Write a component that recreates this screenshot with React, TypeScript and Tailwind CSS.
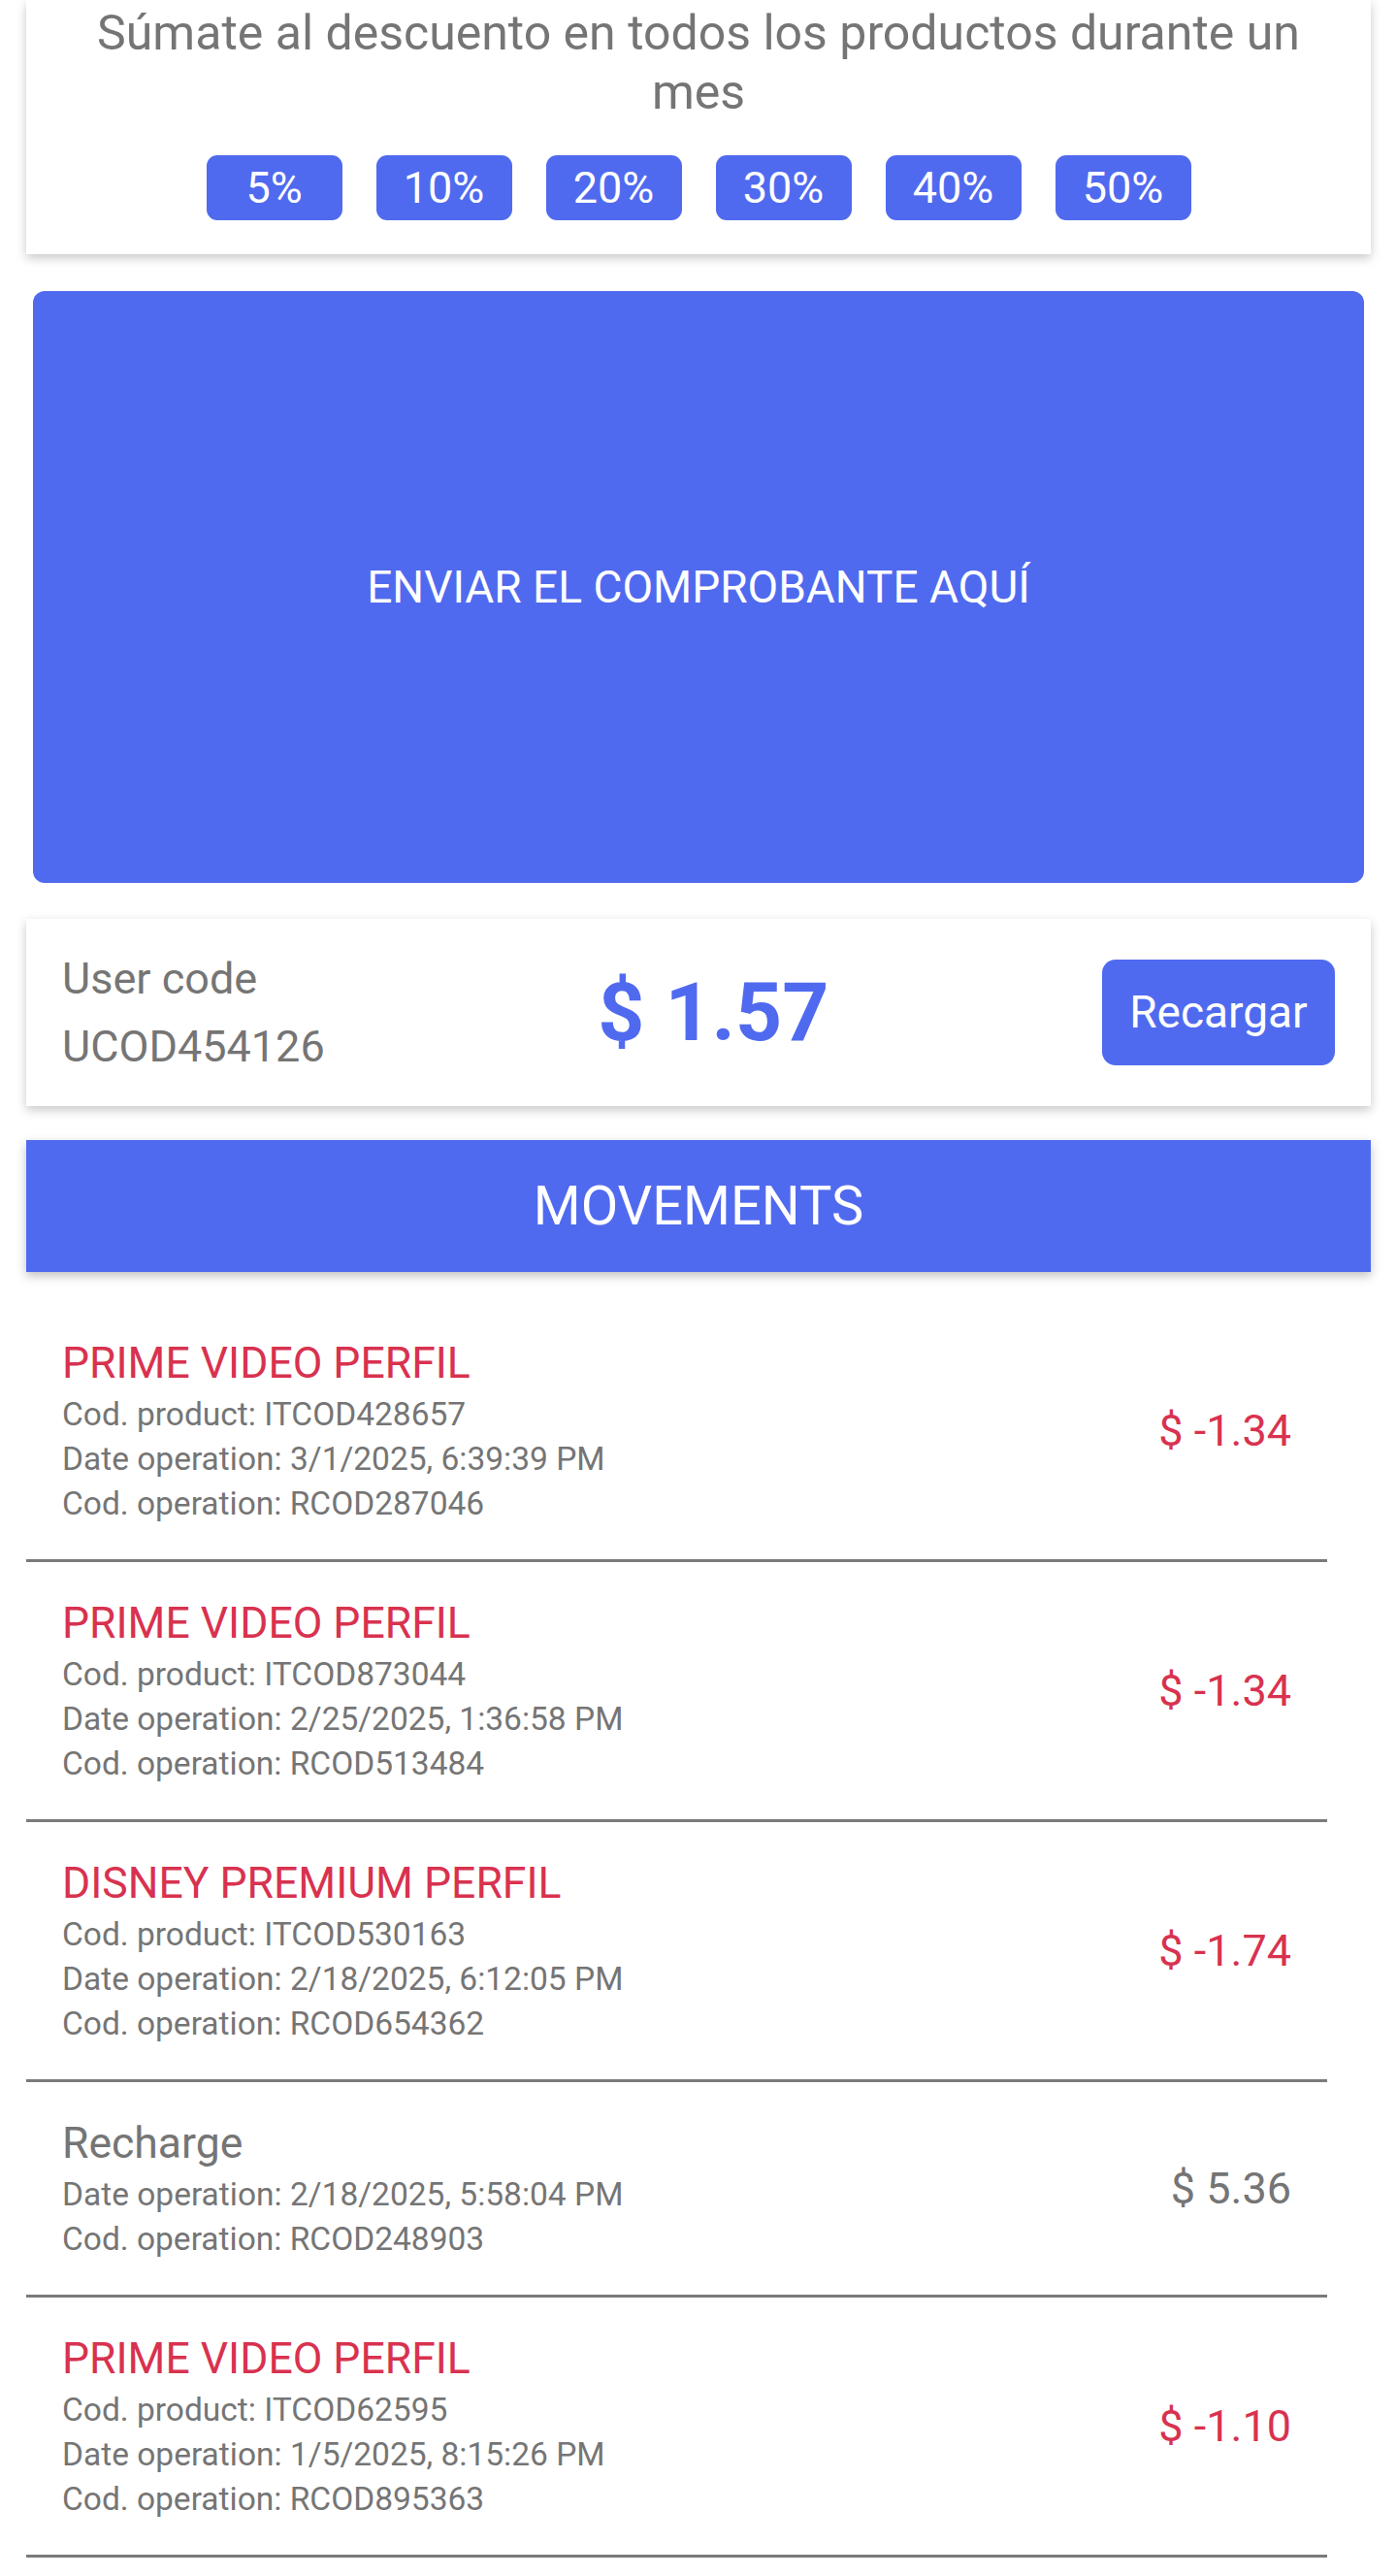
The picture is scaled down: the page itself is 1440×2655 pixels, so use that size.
const discounts = ["5%", "10%", "20%", "30%", "40%", "50%"];

type Movement = {
  title: string;
  product?: string;
  date: string;
  operation: string;
  amount: string;
  charge: boolean;
};

const movements: Movement[] = [
  { title: "PRIME VIDEO PERFIL", product: "ITCOD428657", date: "3/1/2025, 6:39:39 PM", operation: "RCOD287046", amount: "$ -1.34", charge: true },
  { title: "PRIME VIDEO PERFIL", product: "ITCOD873044", date: "2/25/2025, 1:36:58 PM", operation: "RCOD513484", amount: "$ -1.34", charge: true },
  { title: "DISNEY PREMIUM PERFIL", product: "ITCOD530163", date: "2/18/2025, 6:12:05 PM", operation: "RCOD654362", amount: "$ -1.74", charge: true },
  { title: "Recharge", date: "2/18/2025, 5:58:04 PM", operation: "RCOD248903", amount: "$ 5.36", charge: false },
  { title: "PRIME VIDEO PERFIL", product: "ITCOD62595", date: "1/5/2025, 8:15:26 PM", operation: "RCOD895363", amount: "$ -1.10", charge: true },
];

const MovementRow = ({ m }: { m: Movement }) => {
  const color = m.charge ? "text-[#d8324f]" : "text-[#757575]";
  return (
    <div className="flex items-center justify-between border-b-[3px] border-[#7a7a7a] px-[37px] py-[34px]">
      <div>
        <p className={`text-[44.5px] leading-[59px] ${color}`}>{m.title}</p>
        <div className="text-[33.5px] leading-[46px] text-[#757575]">
          {m.product && <p>Cod. product: {m.product}</p>}
          <p>Date operation: {m.date}</p>
          <p>Cod. operation: {m.operation}</p>
        </div>
      </div>
      <p className={`text-[45px] ${color}`}>{m.amount}</p>
    </div>
  );
};

export default function App() {
  return (
    <div className="min-h-[2655px] w-[1440px] bg-white pb-[20px] font-['Roboto',sans-serif]">
      {/* discount card */}
      <div className="mx-[27px] bg-white px-[50px] pb-[35px] pt-[4px] shadow-[0_4px_10px_rgba(0,0,0,0.22)]">
        <p className="text-center text-[50px] leading-[61px] text-[#757575]">
          Súmate al descuento en todos los productos durante un mes
        </p>
        <div className="mt-[34px] flex justify-center gap-[35px]">
          {discounts.map((d) => (
            <button key={d} className="h-[67px] w-[140px] rounded-[11px] bg-[#506aef] text-[45px] text-white">
              {d}
            </button>
          ))}
        </div>
      </div>

      <div className="mx-[34px] mt-[38px] flex h-[610px] items-center justify-center rounded-[12px] bg-[#506aef]">
        <p className="text-[46px] text-white">ENVIAR EL COMPROBANTE AQUÍ</p>
      </div>

      {/* balance card */}
      <div className="mx-[27px] mt-[37px] flex h-[193px] items-center justify-between bg-white px-[37px] shadow-[0_4px_10px_rgba(0,0,0,0.22)]">
        <div className="text-[45px] leading-[70px] text-[#757575]">
          <p>User code</p>
          <p>UCOD454126</p>
        </div>
        <p className="text-[84px] font-bold text-[#506aef]">$ 1.57</p>
        <button className="h-[109px] w-[240px] rounded-[14px] bg-[#506aef] text-[46px] text-white">Recargar</button>
      </div>

      <div className="mx-[27px] mt-[35px] flex h-[136px] items-center justify-center bg-[#506aef] shadow-[0_4px_10px_rgba(0,0,0,0.25)]">
        <p className="text-[56px] text-white">MOVEMENTS</p>
      </div>

      <div className="ml-[27px] mr-[72px] mt-[31px]">
        {movements.map((m) => (
          <MovementRow key={m.operation} m={m} />
        ))}
      </div>
    </div>
  );
}
